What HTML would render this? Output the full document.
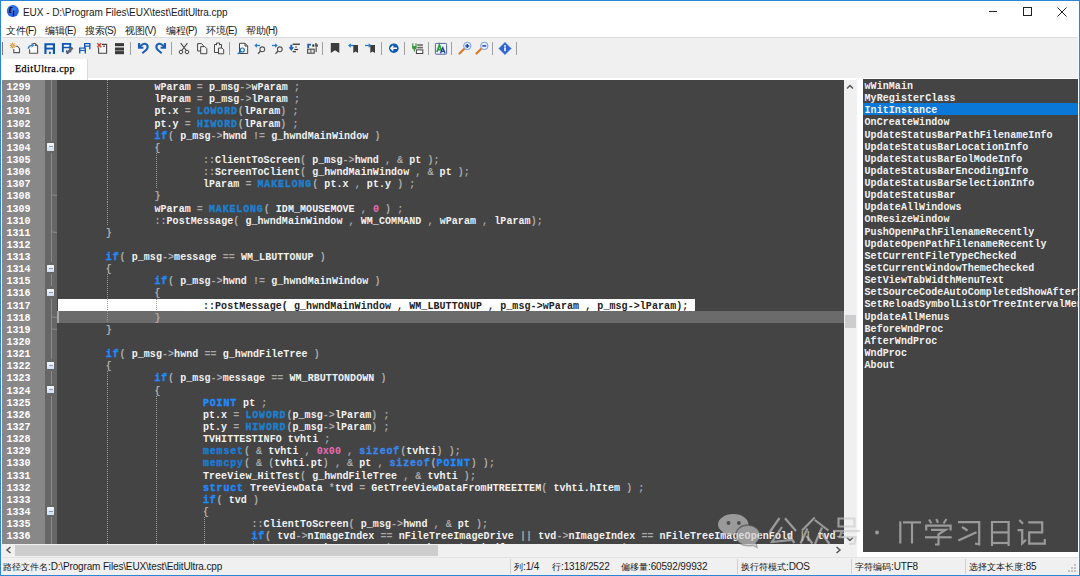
<!DOCTYPE html><html><head><meta charset="utf-8"><style>
*{margin:0;padding:0;box-sizing:border-box}
html,body{width:1080px;height:576px;overflow:hidden;background:#fff}
body{position:relative;font-family:"Liberation Sans",sans-serif}
.a{position:absolute}
.t{white-space:pre}
#code .ln{position:absolute;left:0;height:12.135px;white-space:pre;font:bold 10px/12.135px "Liberation Mono",monospace;letter-spacing:0.067px;transform:translateY(1.6px) scaleY(1.12);transform-origin:0 8px;color:#f2f2f2}
.o{color:#a9a9a9}
.k,.m,.f,.s{letter-spacing:0.826px;-webkit-text-stroke:0.35px currentColor}
.k{color:#1f8bff}
.m{color:#1e80cf}
.f{color:#1c7cd6}
.s{color:#3a86ea}
.n{color:#ea6cb4}
.sel{color:#222}
.num{position:absolute;left:4.5px;font:bold 10px/12.135px "Liberation Mono",monospace;letter-spacing:0px;transform:translateY(1.6px) scaleY(1.12);transform-origin:0 8px;color:#fff}
.menu{letter-spacing:-0.85px;font-size:10px;line-height:12px;top:24.5px;color:#1a1a1a}
.sb .cj{font-size:9.3px;letter-spacing:0}
.menu .cj{font-size:9.8px;letter-spacing:-0.2px}
.sb{letter-spacing:-0.15px;font-size:10px;line-height:12px;top:561px;color:#1a1a1a}
.fn{position:absolute;left:1.5px;font:bold 10px/12.135px "Liberation Mono",monospace;letter-spacing:0.067px;transform:translateY(1.6px) scaleY(1.12);transform-origin:0 8px;color:#f2f2f2;white-space:pre}
</style></head><body>
<div class="a" style="left:0;top:0;width:1080px;height:576px;border:1px solid #2b87d6;border-width:1px 1px 1.5px 1.5px"></div>
<svg class="a" style="left:0;top:0" width="26" height="22"><defs><radialGradient id="gi" cx="45%" cy="40%" r="60%"><stop offset="0" stop-color="#3d8bff"/><stop offset="1" stop-color="#1f55e0"/></radialGradient></defs><circle cx="12.8" cy="11" r="6" fill="url(#gi)"/><path d="M10.2 7.3 L9.3 12.6 M10.2 7.6 H12.6 M9.6 10.2 H11.6 M9.3 12.4 H11.3 M13.7 10.5 L13.4 15.5" stroke="#111" stroke-width="1.3" fill="none"/></svg>
<div class="a t" style="left:23px;top:6.6px;font-size:10px;line-height:12px;color:#1a1a1a;letter-spacing:-0.05px">EUX - D:\Program Files\EUX\test\EditUltra.cpp</div>
<div class="a" style="left:989px;top:11px;width:8px;height:1px;background:#222"></div>
<div class="a" style="left:1023px;top:7px;width:9px;height:9px;border:1px solid #222"></div>
<svg class="a" style="left:1057px;top:7px" width="10" height="10"><path d="M0.5 0.5L9.5 9.5M9.5 0.5L0.5 9.5" stroke="#222" stroke-width="1"/></svg>
<div class="a t menu" style="left:6px"><span class="cj">文件</span>(F)</div>
<div class="a t menu" style="left:45px"><span class="cj">编辑</span>(E)</div>
<div class="a t menu" style="left:85px"><span class="cj">搜索</span>(S)</div>
<div class="a t menu" style="left:125px"><span class="cj">视图</span>(V)</div>
<div class="a t menu" style="left:166px"><span class="cj">编程</span>(P)</div>
<div class="a t menu" style="left:206px"><span class="cj">环境</span>(E)</div>
<div class="a t menu" style="left:246px"><span class="cj">帮助</span>(H)</div>
<div class="a" style="left:2px;top:37px;width:1076px;height:1px;background:#dcdcdc"></div>
<div class="a" style="left:2px;top:38px;width:1076px;height:41px;background:#f0f0f0"></div>
<div class="a" style="left:2px;top:42px;width:1px;height:13px;background:#777"></div>
<div class="a" style="left:130px;top:42px;width:1px;height:13px;background:#a0a0a0"></div>
<div class="a" style="left:171px;top:42px;width:1px;height:13px;background:#a0a0a0"></div>
<div class="a" style="left:229px;top:42px;width:1px;height:13px;background:#a0a0a0"></div>
<div class="a" style="left:322px;top:42px;width:1px;height:13px;background:#a0a0a0"></div>
<div class="a" style="left:381px;top:42px;width:1px;height:13px;background:#a0a0a0"></div>
<div class="a" style="left:404px;top:42px;width:1px;height:13px;background:#a0a0a0"></div>
<div class="a" style="left:428px;top:42px;width:1px;height:13px;background:#a0a0a0"></div>
<div class="a" style="left:451px;top:42px;width:1px;height:13px;background:#a0a0a0"></div>
<div class="a" style="left:492px;top:42px;width:1px;height:13px;background:#a0a0a0"></div>
<div class="a" style="left:516px;top:42px;width:1px;height:13px;background:#a0a0a0"></div>
<svg class="a" style="left:0;top:38px" width="530" height="20" viewBox="0 0 530 20"><path d="M13.8 11 V14.6 H19.5 V10.4 L17.3 8.2 H15.5" fill="#fafafa" stroke="#555" stroke-width="1.1"/><path d="M12.4 5 L13.1 6.9 L14.9 6 L14 7.8 L15.8 8.5 L14 9.2 L14.9 11 L13.1 10.1 L12.4 12 L11.7 10.1 L9.9 11 L10.8 9.2 L9 8.5 L10.8 7.8 L9.9 6 L11.7 6.9 Z" fill="#d8963a" transform="translate(0.2,-0.9) scale(1)"/><circle cx="12.6" cy="7.6" r="1.1" fill="#f3c58a"/><path d="M29.6 11.3 V15.3 H37.6 V7.9 L35.2 5.5 H32.5" fill="#fafafa" stroke="#555" stroke-width="1.1"/><path d="M35 5.5 V8 H37.6 Z" fill="#555"/><path d="M28.3 10.8 Q28.6 7.6 32.2 7.3" fill="none" stroke="#3b82cc" stroke-width="1.5"/><path d="M31.6 5 L34.5 7.2 L31.6 9.6 Z" fill="#3b82cc"/><path d="M44.4 5.2 H55.0 V15.899999999999999 H52.88 V11.405999999999999 H46.519999999999996 V15.899999999999999 H44.4 Z" fill="#0d56b0"/><rect x="46.519999999999996" y="7.2330000000000005" width="6.359999999999999" height="2.3539999999999996" fill="#f4f6fa"/><rect x="48.958" y="13.760000000000002" width="1.802" height="2.14" fill="#0d56b0"/><path d="M61.9 5 H71.2 V14.2 H69.34 V10.335999999999999 H63.76 V14.2 H61.9 Z" fill="#0d56b0"/><rect x="63.76" y="6.747999999999999" width="5.58" height="2.024" fill="#f4f6fa"/><rect x="65.899" y="12.36" width="1.5810000000000002" height="1.8399999999999999" fill="#0d56b0"/><path d="M67 15.3 L72.6 9.7" stroke="#666" stroke-width="2.6"/><path d="M66.2 16 L67.3 14.3 L68.2 15.2 Z" fill="#333"/><path d="M84 5 H90.5 V11.3 H89.2 V8.654 H85.3 V11.3 H84 Z" fill="#0d56b0"/><rect x="85.3" y="6.197" width="3.9" height="1.386" fill="#f4f6fa"/><path d="M79 9.5 H86 V15.6 H84.6 V13.038 H80.4 V15.6 H79 Z" fill="#1560b8"/><rect x="80.4" y="10.659" width="4.199999999999999" height="1.3419999999999999" fill="#cfe0f4"/><path d="M98.6 6.4 H106.6 V15.3 H98.6 Z" fill="#f4f4f4" stroke="#444" stroke-width="1.1"/><rect x="97" y="4.5" width="5" height="5" fill="#f0f0f0"/><path d="M97.3 5.2 L101.3 9.2 M101.3 5.2 L97.3 9.2" stroke="#c8402e" stroke-width="1.4"/><rect x="103" y="7.6" width="2" height="1.2" fill="#555"/><rect x="115" y="5.1" width="9" height="3.1" fill="#3a3a3a"/><rect x="115" y="9.5" width="9" height="3.1" fill="#3a3a3a"/><rect x="115" y="13.1" width="9" height="3.1" fill="#3a3a3a"/><path d="M139 5.1 V9.8 H143.4" fill="none" stroke="#1a5fb4" stroke-width="2.1"/><path d="M139.8 9 L141.6 7 Q144.2 4.6 146.7 6.5 Q148.8 8.8 146.6 11.5 L142.3 15.3" fill="none" stroke="#1a5fb4" stroke-width="2"/><path d="M165 5.1 V9.8 H160.6" fill="none" stroke="#1a5fb4" stroke-width="2.1"/><path d="M164.2 9 L162.4 7 Q159.8 4.6 157.3 6.5 Q155.2 8.8 157.4 11.5 L161.7 15.3" fill="none" stroke="#1a5fb4" stroke-width="2"/><path d="M180.7 5.2 L186.3 12.5 M187.4 5.2 L181.8 12.5" stroke="#444" stroke-width="1.1"/><circle cx="181" cy="14" r="1.8" fill="none" stroke="#444" stroke-width="1"/><circle cx="187" cy="14" r="1.8" fill="none" stroke="#444" stroke-width="1"/><path d="M197.6 5.6 H201.5 L203.3 7.4 V13 H197.6 Z" fill="#f4f4f4" stroke="#444" stroke-width="1"/><path d="M200.7 8.6 H204.8 L206.8 10.6 V15.7 H200.7 Z" fill="#f4f4f4" stroke="#444" stroke-width="1"/><path d="M214.5 6.5 H221.5 V14.5 H214.5 Z" fill="#f4f4f4" stroke="#444" stroke-width="1"/><path d="M216.5 7.3 V5 H219.5 V7.3" fill="#f4f4f4" stroke="#444" stroke-width="1"/><path d="M218.5 10 H222 L223.7 11.7 V15.8 H218.5 Z" fill="#f4f4f4" stroke="#444" stroke-width="1"/><path d="M239.5 5.3 H245 L247.7 8 V15.5 H239.5 Z" fill="#f4f4f4" stroke="#444" stroke-width="1"/><path d="M245 5.3 V8 H247.7" fill="none" stroke="#444" stroke-width="1"/><circle cx="242.3" cy="12" r="2" fill="#f4f4f4" stroke="#2070c0" stroke-width="1.2"/><path d="M240.8 13.5 L237.7 16" stroke="#2070c0" stroke-width="1.4"/><path d="M255 7.5 H260" stroke="#2a7ad0" stroke-width="1.3"/><path d="M254.3 7.5 L257 5.2 V9.8 Z" fill="#2a7ad0"/><circle cx="262.3" cy="11.3" r="2.4" fill="none" stroke="#555" stroke-width="1.1"/><path d="M260.6 13 L258 15.8" stroke="#555" stroke-width="1.4"/><path d="M272 7.5 H277" stroke="#2a7ad0" stroke-width="1.3"/><path d="M277.7 7.5 L275 5.2 V9.8 Z" fill="#2a7ad0"/><circle cx="279.8" cy="11.3" r="2.4" fill="none" stroke="#555" stroke-width="1.1"/><path d="M278.1 13 L275.5 15.8" stroke="#555" stroke-width="1.4"/><path d="M291.3 6.8 V10" stroke="#1a5fb4" stroke-width="2"/><path d="M288.7 9.2 H294 L291.3 13 Z" fill="#1a5fb4"/><rect x="292.6" y="5.6" width="7.3" height="1.3" fill="#333"/><rect x="295.2" y="8.2" width="1.6" height="1.6" fill="#777"/><rect x="294.3" y="10.9" width="3.8" height="1.2" fill="#333"/><rect x="292.6" y="13.1" width="3.3" height="1.2" fill="#333"/><path d="M308.2 10 V6.6 H311" fill="none" stroke="#1a5fb4" stroke-width="1.8"/><rect x="312.3" y="6.4" width="2" height="2.3" fill="#333"/><rect x="315.3" y="5" width="1.2" height="3.7" fill="#333"/><rect x="316.3" y="6.4" width="1.5" height="2.3" fill="#333"/><rect x="307" y="10.6" width="7.8" height="5.2" fill="#555"/><rect x="308.2" y="11.8" width="2.2" height="2.8" fill="#e8e8e8"/><rect x="311.4" y="11.8" width="2.2" height="2.8" fill="#e8e8e8"/><rect x="315.6" y="9.2" width="1.2" height="4.8" fill="#555"/><path d="M330.8 5 H339.3 V15 L335 12.3 L330.8 15 Z" fill="#3c3c3c"/><path d="M349 7.5 H354.5" stroke="#2a7ad0" stroke-width="1.3"/><path d="M348 7.5 L350.8 5.3 V9.7 Z" fill="#2a7ad0"/><path d="M353.3 7 H358 V15 L355.6 13.4 L353.3 15 Z" fill="#3c3c3c"/><path d="M365 7.5 H370.5" stroke="#2a7ad0" stroke-width="1.3"/><path d="M371.5 7.5 L368.7 5.3 V9.7 Z" fill="#2a7ad0"/><path d="M370.3 7 H375 V15 L372.6 13.4 L370.3 15 Z" fill="#3c3c3c"/><circle cx="393.8" cy="10.2" r="4.8" fill="#0d5ab0"/><path d="M397 10.2 H391.2 M393.3 7.8 L390.9 10.2 L393.3 12.6" fill="none" stroke="#fff" stroke-width="1.4"/><path d="M412.8 5.3 V8 M416 5.3 V8" stroke="#3c9a3a" stroke-width="1.2"/><path d="M412.1 8 H416.7 V9.6 Q416.7 11.8 414.4 11.8 Q412.1 11.8 412.1 9.6 Z" fill="#3c9a3a"/><path d="M414.4 11.5 V13.4" stroke="#3c9a3a" stroke-width="1.2"/><rect x="417.3" y="6.2" width="5.6" height="1.6" fill="#666"/><rect x="417.3" y="8.8" width="5.6" height="1.6" fill="#666"/><rect x="416.4" y="11.9" width="6.4" height="3.6" fill="#fff" stroke="#444" stroke-width="1"/><rect x="435.4" y="5.4" width="11.2" height="10.8" rx="0.8" fill="#eef2fa" stroke="#50659e" stroke-width="1"/><path d="M436.9 14 L439.4 6.7 L441.9 14 M437.8 11.6 H441" fill="none" stroke="#2e9a3a" stroke-width="1.6"/><path d="M440.5 15.2 L442.8 9.5 L445.1 15.2 M441.3 13.4 H444.3" fill="none" stroke="#1a3a9a" stroke-width="1.2"/><path d="M459.5 15.5 L464.3 10.7" stroke="#d97a2b" stroke-width="2.2" stroke-linecap="round"/><circle cx="467.3" cy="7.9" r="3.7" fill="#e6eefc" stroke="#7a9ad8" stroke-width="1"/><path d="M465.3 7.9 H469.3 M467.3 5.9 V9.9" stroke="#1a48b0" stroke-width="1.5"/><path d="M476.5 15.5 L481.3 10.7" stroke="#d97a2b" stroke-width="2.2" stroke-linecap="round"/><circle cx="484.3" cy="7.9" r="3.7" fill="#e6eefc" stroke="#7a9ad8" stroke-width="1"/><path d="M482.3 7.9 H486.3" stroke="#1a48b0" stroke-width="1.5"/><path d="M505 4.2 L511.3 10.5 L505 16.8 L498.7 10.5 Z" fill="#2d62d2" stroke="#8aa8e8" stroke-width="0.9"/><circle cx="505" cy="8" r="0.9" fill="#fff"/><rect x="504.2" y="9.4" width="1.6" height="3.8" fill="#fff"/></svg>
<div class="a" style="left:2px;top:78px;width:1076px;height:2px;background:#fff"></div>
<div class="a" style="left:2px;top:58.5px;width:86px;height:21.5px;background:#fff;border-right:1px solid #dadada"></div>
<div class="a t" style="left:15px;top:62.5px;font:10px 'Liberation Serif';color:#000;letter-spacing:0.45px;-webkit-text-stroke:0.25px #000">EditUltra.cpp</div>
<div class="a" style="left:2px;top:80px;width:842px;height:463.6px;background:#444;overflow:hidden" id="ed"><div class="a" style="left:0;top:0.2px;width:842px;height:464px">
<div class="a" style="left:0;top:0;width:43px;height:100%;background:#888"></div>
<div class="a" style="left:43px;top:0;width:12px;height:100%;background:#666"></div>
<div class="a" style="left:49px;top:0;width:1px;height:100%;background:#8a8a8a"></div>
<div class="a" style="left:43px;top:60.675px;width:12px;height:12.135px;background:#666"></div>
<div class="a" style="left:44.7px;top:63.175px;width:7.6px;height:7.3px;background:linear-gradient(#f4f8fc,#cfe0f0);border-radius:0.5px"></div>
<div class="a" style="left:46.5px;top:66.27499999999999px;width:4px;height:1px;background:#8a9ab0"></div>
<div class="a" style="left:43px;top:182.025px;width:12px;height:12.135px;background:#666"></div>
<div class="a" style="left:44.7px;top:184.525px;width:7.6px;height:7.3px;background:linear-gradient(#f4f8fc,#cfe0f0);border-radius:0.5px"></div>
<div class="a" style="left:46.5px;top:187.625px;width:4px;height:1px;background:#8a9ab0"></div>
<div class="a" style="left:43px;top:206.295px;width:12px;height:12.135px;background:#666"></div>
<div class="a" style="left:44.7px;top:208.795px;width:7.6px;height:7.3px;background:linear-gradient(#f4f8fc,#cfe0f0);border-radius:0.5px"></div>
<div class="a" style="left:46.5px;top:211.89499999999998px;width:4px;height:1px;background:#8a9ab0"></div>
<div class="a" style="left:43px;top:279.105px;width:12px;height:12.135px;background:#666"></div>
<div class="a" style="left:44.7px;top:281.605px;width:7.6px;height:7.3px;background:linear-gradient(#f4f8fc,#cfe0f0);border-radius:0.5px"></div>
<div class="a" style="left:46.5px;top:284.70500000000004px;width:4px;height:1px;background:#8a9ab0"></div>
<div class="a" style="left:43px;top:303.375px;width:12px;height:12.135px;background:#666"></div>
<div class="a" style="left:44.7px;top:305.875px;width:7.6px;height:7.3px;background:linear-gradient(#f4f8fc,#cfe0f0);border-radius:0.5px"></div>
<div class="a" style="left:46.5px;top:308.975px;width:4px;height:1px;background:#8a9ab0"></div>
<div class="a" style="left:43px;top:424.72499999999997px;width:12px;height:12.135px;background:#666"></div>
<div class="a" style="left:44.7px;top:427.22499999999997px;width:7.6px;height:7.3px;background:linear-gradient(#f4f8fc,#cfe0f0);border-radius:0.5px"></div>
<div class="a" style="left:46.5px;top:430.325px;width:4px;height:1px;background:#8a9ab0"></div>
<svg class="a" style="left:48px;top:109.215px" width="8" height="12"><path d="M1.5 4.2 Q1.7 6.3 3.6 6.3 H7" fill="none" stroke="#8a8a8a" stroke-width="1"/></svg>
<svg class="a" style="left:48px;top:145.62px" width="8" height="12"><path d="M1.5 4.2 Q1.7 6.3 3.6 6.3 H7" fill="none" stroke="#8a8a8a" stroke-width="1"/></svg>
<svg class="a" style="left:48px;top:230.565px" width="8" height="12"><path d="M1.5 4.2 Q1.7 6.3 3.6 6.3 H7" fill="none" stroke="#8a8a8a" stroke-width="1"/></svg>
<svg class="a" style="left:48px;top:242.7px" width="8" height="12"><path d="M1.5 4.2 Q1.7 6.3 3.6 6.3 H7" fill="none" stroke="#8a8a8a" stroke-width="1"/></svg>
<div class="a" style="left:55px;top:230.565px;width:800px;height:12.135px;background:#6b6b6b"></div>
<div class="a" style="left:55px;top:230.565px;width:1.5px;height:12.135px;background:#a8a8a8"></div>
<div class="a" style="left:55.8px;top:218.43px;width:637px;height:12.135px;background:#fff"></div>
<div class="num" style="top:0.0px">1299</div>
<div class="num" style="top:12.135px">1300</div>
<div class="num" style="top:24.27px">1301</div>
<div class="num" style="top:36.405px">1302</div>
<div class="num" style="top:48.54px">1303</div>
<div class="num" style="top:60.675px">1304</div>
<div class="num" style="top:72.81px">1305</div>
<div class="num" style="top:84.945px">1306</div>
<div class="num" style="top:97.08px">1307</div>
<div class="num" style="top:109.215px">1308</div>
<div class="num" style="top:121.35px">1309</div>
<div class="num" style="top:133.48499999999999px">1310</div>
<div class="num" style="top:145.62px">1311</div>
<div class="num" style="top:157.755px">1312</div>
<div class="num" style="top:169.89px">1313</div>
<div class="num" style="top:182.025px">1314</div>
<div class="num" style="top:194.16px">1315</div>
<div class="num" style="top:206.295px">1316</div>
<div class="num" style="top:218.43px">1317</div>
<div class="num" style="top:230.565px">1318</div>
<div class="num" style="top:242.7px">1319</div>
<div class="num" style="top:254.835px">1320</div>
<div class="num" style="top:266.96999999999997px">1321</div>
<div class="num" style="top:279.105px">1322</div>
<div class="num" style="top:291.24px">1323</div>
<div class="num" style="top:303.375px">1324</div>
<div class="num" style="top:315.51px">1325</div>
<div class="num" style="top:327.645px">1326</div>
<div class="num" style="top:339.78px">1327</div>
<div class="num" style="top:351.915px">1328</div>
<div class="num" style="top:364.05px">1329</div>
<div class="num" style="top:376.185px">1330</div>
<div class="num" style="top:388.32px">1331</div>
<div class="num" style="top:400.455px">1332</div>
<div class="num" style="top:412.59px">1333</div>
<div class="num" style="top:424.72499999999997px">1334</div>
<div class="num" style="top:436.86px">1335</div>
<div class="num" style="top:448.995px">1336</div>
<div class="num" style="top:461.13px">1337</div>
<div class="a" style="left:105.14px;top:0.0px;width:1px;height:12.135px;background:repeating-linear-gradient(#9a9a9a 0 1px,transparent 1px 2px)"></div>
<div class="a" style="left:105.14px;top:12.135px;width:1px;height:12.135px;background:repeating-linear-gradient(#9a9a9a 0 1px,transparent 1px 2px)"></div>
<div class="a" style="left:105.14px;top:24.27px;width:1px;height:12.135px;background:repeating-linear-gradient(#9a9a9a 0 1px,transparent 1px 2px)"></div>
<div class="a" style="left:105.14px;top:36.405px;width:1px;height:12.135px;background:repeating-linear-gradient(#9a9a9a 0 1px,transparent 1px 2px)"></div>
<div class="a" style="left:105.14px;top:48.54px;width:1px;height:12.135px;background:repeating-linear-gradient(#9a9a9a 0 1px,transparent 1px 2px)"></div>
<div class="a" style="left:105.14px;top:60.675px;width:1px;height:12.135px;background:repeating-linear-gradient(#9a9a9a 0 1px,transparent 1px 2px)"></div>
<div class="a" style="left:105.14px;top:72.81px;width:1px;height:12.135px;background:repeating-linear-gradient(#9a9a9a 0 1px,transparent 1px 2px)"></div>
<div class="a" style="left:153.68px;top:72.81px;width:1px;height:12.135px;background:repeating-linear-gradient(#9a9a9a 0 1px,transparent 1px 2px)"></div>
<div class="a" style="left:105.14px;top:84.945px;width:1px;height:12.135px;background:repeating-linear-gradient(#9a9a9a 0 1px,transparent 1px 2px)"></div>
<div class="a" style="left:153.68px;top:84.945px;width:1px;height:12.135px;background:repeating-linear-gradient(#9a9a9a 0 1px,transparent 1px 2px)"></div>
<div class="a" style="left:105.14px;top:97.08px;width:1px;height:12.135px;background:repeating-linear-gradient(#9a9a9a 0 1px,transparent 1px 2px)"></div>
<div class="a" style="left:153.68px;top:97.08px;width:1px;height:12.135px;background:repeating-linear-gradient(#9a9a9a 0 1px,transparent 1px 2px)"></div>
<div class="a" style="left:105.14px;top:109.215px;width:1px;height:12.135px;background:repeating-linear-gradient(#9a9a9a 0 1px,transparent 1px 2px)"></div>
<div class="a" style="left:105.14px;top:121.35px;width:1px;height:12.135px;background:repeating-linear-gradient(#9a9a9a 0 1px,transparent 1px 2px)"></div>
<div class="a" style="left:105.14px;top:133.48499999999999px;width:1px;height:12.135px;background:repeating-linear-gradient(#9a9a9a 0 1px,transparent 1px 2px)"></div>
<div class="a" style="left:105.14px;top:194.16px;width:1px;height:12.135px;background:repeating-linear-gradient(#9a9a9a 0 1px,transparent 1px 2px)"></div>
<div class="a" style="left:105.14px;top:206.295px;width:1px;height:12.135px;background:repeating-linear-gradient(#9a9a9a 0 1px,transparent 1px 2px)"></div>
<div class="a" style="left:105.14px;top:218.43px;width:1px;height:12.135px;background:repeating-linear-gradient(#9a9a9a 0 1px,transparent 1px 2px)"></div>
<div class="a" style="left:153.68px;top:218.43px;width:1px;height:12.135px;background:repeating-linear-gradient(#9a9a9a 0 1px,transparent 1px 2px)"></div>
<div class="a" style="left:105.14px;top:230.565px;width:1px;height:12.135px;background:repeating-linear-gradient(#9a9a9a 0 1px,transparent 1px 2px)"></div>
<div class="a" style="left:105.14px;top:291.24px;width:1px;height:12.135px;background:repeating-linear-gradient(#9a9a9a 0 1px,transparent 1px 2px)"></div>
<div class="a" style="left:105.14px;top:303.375px;width:1px;height:12.135px;background:repeating-linear-gradient(#9a9a9a 0 1px,transparent 1px 2px)"></div>
<div class="a" style="left:105.14px;top:315.51px;width:1px;height:12.135px;background:repeating-linear-gradient(#9a9a9a 0 1px,transparent 1px 2px)"></div>
<div class="a" style="left:153.68px;top:315.51px;width:1px;height:12.135px;background:repeating-linear-gradient(#9a9a9a 0 1px,transparent 1px 2px)"></div>
<div class="a" style="left:105.14px;top:327.645px;width:1px;height:12.135px;background:repeating-linear-gradient(#9a9a9a 0 1px,transparent 1px 2px)"></div>
<div class="a" style="left:153.68px;top:327.645px;width:1px;height:12.135px;background:repeating-linear-gradient(#9a9a9a 0 1px,transparent 1px 2px)"></div>
<div class="a" style="left:105.14px;top:339.78px;width:1px;height:12.135px;background:repeating-linear-gradient(#9a9a9a 0 1px,transparent 1px 2px)"></div>
<div class="a" style="left:153.68px;top:339.78px;width:1px;height:12.135px;background:repeating-linear-gradient(#9a9a9a 0 1px,transparent 1px 2px)"></div>
<div class="a" style="left:105.14px;top:351.915px;width:1px;height:12.135px;background:repeating-linear-gradient(#9a9a9a 0 1px,transparent 1px 2px)"></div>
<div class="a" style="left:153.68px;top:351.915px;width:1px;height:12.135px;background:repeating-linear-gradient(#9a9a9a 0 1px,transparent 1px 2px)"></div>
<div class="a" style="left:105.14px;top:364.05px;width:1px;height:12.135px;background:repeating-linear-gradient(#9a9a9a 0 1px,transparent 1px 2px)"></div>
<div class="a" style="left:153.68px;top:364.05px;width:1px;height:12.135px;background:repeating-linear-gradient(#9a9a9a 0 1px,transparent 1px 2px)"></div>
<div class="a" style="left:105.14px;top:376.185px;width:1px;height:12.135px;background:repeating-linear-gradient(#9a9a9a 0 1px,transparent 1px 2px)"></div>
<div class="a" style="left:153.68px;top:376.185px;width:1px;height:12.135px;background:repeating-linear-gradient(#9a9a9a 0 1px,transparent 1px 2px)"></div>
<div class="a" style="left:105.14px;top:388.32px;width:1px;height:12.135px;background:repeating-linear-gradient(#9a9a9a 0 1px,transparent 1px 2px)"></div>
<div class="a" style="left:153.68px;top:388.32px;width:1px;height:12.135px;background:repeating-linear-gradient(#9a9a9a 0 1px,transparent 1px 2px)"></div>
<div class="a" style="left:105.14px;top:400.455px;width:1px;height:12.135px;background:repeating-linear-gradient(#9a9a9a 0 1px,transparent 1px 2px)"></div>
<div class="a" style="left:153.68px;top:400.455px;width:1px;height:12.135px;background:repeating-linear-gradient(#9a9a9a 0 1px,transparent 1px 2px)"></div>
<div class="a" style="left:105.14px;top:412.59px;width:1px;height:12.135px;background:repeating-linear-gradient(#9a9a9a 0 1px,transparent 1px 2px)"></div>
<div class="a" style="left:153.68px;top:412.59px;width:1px;height:12.135px;background:repeating-linear-gradient(#9a9a9a 0 1px,transparent 1px 2px)"></div>
<div class="a" style="left:105.14px;top:424.72499999999997px;width:1px;height:12.135px;background:repeating-linear-gradient(#9a9a9a 0 1px,transparent 1px 2px)"></div>
<div class="a" style="left:153.68px;top:424.72499999999997px;width:1px;height:12.135px;background:repeating-linear-gradient(#9a9a9a 0 1px,transparent 1px 2px)"></div>
<div class="a" style="left:105.14px;top:436.86px;width:1px;height:12.135px;background:repeating-linear-gradient(#9a9a9a 0 1px,transparent 1px 2px)"></div>
<div class="a" style="left:153.68px;top:436.86px;width:1px;height:12.135px;background:repeating-linear-gradient(#9a9a9a 0 1px,transparent 1px 2px)"></div>
<div class="a" style="left:202.22px;top:436.86px;width:1px;height:12.135px;background:repeating-linear-gradient(#9a9a9a 0 1px,transparent 1px 2px)"></div>
<div class="a" style="left:105.14px;top:448.995px;width:1px;height:12.135px;background:repeating-linear-gradient(#9a9a9a 0 1px,transparent 1px 2px)"></div>
<div class="a" style="left:153.68px;top:448.995px;width:1px;height:12.135px;background:repeating-linear-gradient(#9a9a9a 0 1px,transparent 1px 2px)"></div>
<div class="a" style="left:202.22px;top:448.995px;width:1px;height:12.135px;background:repeating-linear-gradient(#9a9a9a 0 1px,transparent 1px 2px)"></div>
<div class="a" style="left:105.14px;top:461.13px;width:1px;height:12.135px;background:repeating-linear-gradient(#9a9a9a 0 1px,transparent 1px 2px)"></div>
<div class="a" style="left:153.68px;top:461.13px;width:1px;height:12.135px;background:repeating-linear-gradient(#9a9a9a 0 1px,transparent 1px 2px)"></div>
<div class="a" style="left:202.22px;top:461.13px;width:1px;height:12.135px;background:repeating-linear-gradient(#9a9a9a 0 1px,transparent 1px 2px)"></div>
<div class="a" style="left:250.76px;top:461.13px;width:1px;height:12.135px;background:repeating-linear-gradient(#9a9a9a 0 1px,transparent 1px 2px)"></div>
<div id="code" class="a" style="left:0;top:0">
<div class="ln" style="left:152.38px;top:0.0px">wParam<span class="o"> = </span>p_msg<span class="o">-&gt;</span>wParam<span class="o"> ;</span></div>
<div class="ln" style="left:152.38px;top:12.135px">lParam<span class="o"> = </span>p_msg<span class="o">-&gt;</span>lParam<span class="o"> ;</span></div>
<div class="ln" style="left:152.38px;top:24.27px">pt.x<span class="o"> = </span><span class="m">LOWORD</span><span class="o">(</span>lParam<span class="o">)</span><span class="o"> ;</span></div>
<div class="ln" style="left:152.38px;top:36.405px">pt.y<span class="o"> = </span><span class="m">HIWORD</span><span class="o">(</span>lParam<span class="o">)</span><span class="o"> ;</span></div>
<div class="ln" style="left:152.38px;top:48.54px"><span class="k">if</span><span class="o">( </span>p_msg<span class="o">-&gt;</span>hwnd<span class="o"> != </span>g_hwndMainWindow<span class="o"> )</span></div>
<div class="ln" style="left:152.38px;top:60.675px"><span class="o">{</span></div>
<div class="ln" style="left:200.92px;top:72.81px"><span class="o">::</span>ClientToScreen<span class="o">( </span>p_msg<span class="o">-&gt;</span>hwnd<span class="o"> , &amp; </span>pt<span class="o"> );</span></div>
<div class="ln" style="left:200.92px;top:84.945px"><span class="o">::</span>ScreenToClient<span class="o">( </span>g_hwndMainWindow<span class="o"> , &amp; </span>pt<span class="o"> );</span></div>
<div class="ln" style="left:200.92px;top:97.08px">lParam<span class="o"> = </span><span class="m">MAKELONG</span><span class="o">( </span>pt.x<span class="o"> , </span>pt.y<span class="o"> ) ;</span></div>
<div class="ln" style="left:152.38px;top:109.215px"><span class="o">}</span></div>
<div class="ln" style="left:152.38px;top:121.35px">wParam<span class="o"> = </span><span class="m">MAKELONG</span><span class="o">( </span>IDM_MOUSEMOVE<span class="o"> , </span><span class="n">0</span><span class="o"> ) ;</span></div>
<div class="ln" style="left:152.38px;top:133.48499999999999px"><span class="o">::</span>PostMessage<span class="o">( </span>g_hwndMainWindow<span class="o"> , </span>WM_COMMAND<span class="o"> , </span>wParam<span class="o"> , </span>lParam<span class="o">);</span></div>
<div class="ln" style="left:103.84px;top:145.62px"><span class="o">}</span></div>
<div class="ln" style="left:55.300000000000004px;top:157.755px"></div>
<div class="ln" style="left:103.84px;top:169.89px"><span class="k">if</span><span class="o">( </span>p_msg<span class="o">-&gt;</span>message<span class="o"> == </span>WM_LBUTTONUP<span class="o"> )</span></div>
<div class="ln" style="left:103.84px;top:182.025px"><span class="o">{</span></div>
<div class="ln" style="left:152.38px;top:194.16px"><span class="k">if</span><span class="o">( </span>p_msg<span class="o">-&gt;</span>hwnd<span class="o"> != </span>g_hwndMainWindow<span class="o"> )</span></div>
<div class="ln" style="left:152.38px;top:206.295px"><span class="o">{</span></div>
<div class="ln" style="left:200.92px;top:218.43px"><span class="sel">::PostMessage( g_hwndMainWindow , WM_LBUTTONUP , p_msg-&gt;wParam , p_msg-&gt;lParam);</span></div>
<div class="ln" style="left:152.38px;top:230.565px"><span class="o">}</span></div>
<div class="ln" style="left:103.84px;top:242.7px"><span class="o">}</span></div>
<div class="ln" style="left:55.300000000000004px;top:254.835px"></div>
<div class="ln" style="left:103.84px;top:266.96999999999997px"><span class="k">if</span><span class="o">( </span>p_msg<span class="o">-&gt;</span>hwnd<span class="o"> == </span>g_hwndFileTree<span class="o"> )</span></div>
<div class="ln" style="left:103.84px;top:279.105px"><span class="o">{</span></div>
<div class="ln" style="left:152.38px;top:291.24px"><span class="k">if</span><span class="o">( </span>p_msg<span class="o">-&gt;</span>message<span class="o"> == </span>WM_RBUTTONDOWN<span class="o"> )</span></div>
<div class="ln" style="left:152.38px;top:303.375px"><span class="o">{</span></div>
<div class="ln" style="left:200.92px;top:315.51px"><span class="k">POINT</span> pt<span class="o"> ;</span></div>
<div class="ln" style="left:200.92px;top:327.645px">pt.x<span class="o"> = </span><span class="m">LOWORD</span><span class="o">(</span>p_msg<span class="o">-&gt;</span>lParam<span class="o">)</span><span class="o"> ;</span></div>
<div class="ln" style="left:200.92px;top:339.78px">pt.y<span class="o"> = </span><span class="m">HIWORD</span><span class="o">(</span>p_msg<span class="o">-&gt;</span>lParam<span class="o">)</span><span class="o"> ;</span></div>
<div class="ln" style="left:200.92px;top:351.915px">TVHITTESTINFO tvhti<span class="o"> ;</span></div>
<div class="ln" style="left:200.92px;top:364.05px"><span class="f">memset</span><span class="o">( &amp; </span>tvhti<span class="o"> , </span><span class="n">0x00</span><span class="o"> , </span><span class="s">sizeof</span><span class="o">(</span>tvhti<span class="o">) );</span></div>
<div class="ln" style="left:200.92px;top:376.185px"><span class="f">memcpy</span><span class="o">( &amp; (</span>tvhti.pt<span class="o">) , &amp; </span>pt<span class="o"> , </span><span class="s">sizeof</span><span class="o">(</span><span class="k">POINT</span><span class="o">) );</span></div>
<div class="ln" style="left:200.92px;top:388.32px">TreeView_HitTest<span class="o">( </span>g_hwndFileTree<span class="o"> , &amp; </span>tvhti<span class="o"> );</span></div>
<div class="ln" style="left:200.92px;top:400.455px"><span class="k">struct</span> TreeViewData <span class="o">*</span>tvd<span class="o"> = </span>GetTreeViewDataFromHTREEITEM<span class="o">( </span>tvhti.hItem<span class="o"> ) ;</span></div>
<div class="ln" style="left:200.92px;top:412.59px"><span class="k">if</span><span class="o">( </span>tvd<span class="o"> )</span></div>
<div class="ln" style="left:200.92px;top:424.72499999999997px"><span class="o">{</span></div>
<div class="ln" style="left:249.45999999999998px;top:436.86px"><span class="o">::</span>ClientToScreen<span class="o">( </span>p_msg<span class="o">-&gt;</span>hwnd<span class="o"> , &amp; </span>pt<span class="o"> );</span></div>
<div class="ln" style="left:249.45999999999998px;top:448.995px"><span class="k">if</span><span class="o">( </span>tvd<span class="o">-&gt;</span>nImageIndex<span class="o"> == </span>nFileTreeImageDrive<span class="o"> || </span>tvd<span class="o">-&gt;</span>nImageIndex<span class="o"> == </span>nFileTreeImageOpenFold<span class="o"> || </span>tvd<span class="o">-&gt;</span>nImageIndex<span class="o"> == </span>nFileTreeImageClosedFold<span class="o"> )</span></div>
<div class="ln" style="left:298.0px;top:461.13px">TrackPopupMenu<span class="o">( </span>GetSubMenu<span class="o">( </span>g_hFileTreePopupMenu<span class="o"> , </span><span class="n">0</span><span class="o"> ) , </span>TPM_LEFTALIGN<span class="o"> , </span>pt.x<span class="o"> , </span>pt.y<span class="o"> , </span><span class="n">0</span><span class="o"> , </span>g_hwndMainWindow<span class="o"> , </span><span class="k">NULL</span><span class="o"> );</span></div>
</div>
</div></div>
<div class="a" style="left:2px;top:543.6px;width:855px;height:13.4px;background:#f0f0f0"></div>
<div class="a" style="left:15px;top:545px;width:423px;height:11px;background:#cdcdcd"></div>
<svg class="a" style="left:5px;top:546px" width="8" height="8"><path d="M5.5 1L2 4L5.5 7" stroke="#555" stroke-width="1.5" fill="none"/></svg>
<svg class="a" style="left:834px;top:546px" width="8" height="8"><path d="M2.5 1L6 4L2.5 7" stroke="#555" stroke-width="1.5" fill="none"/></svg>
<div class="a" style="left:844px;top:80px;width:13px;height:463.5px;background:#f0f0f0"></div>
<div class="a" style="left:845px;top:315px;width:11px;height:13px;background:#cdcdcd"></div>
<svg class="a" style="left:846px;top:83px" width="8" height="8"><path d="M1 5.5L4 2.5L7 5.5" stroke="#555" stroke-width="1.5" fill="none"/></svg>
<svg class="a" style="left:846px;top:535px" width="8" height="8"><path d="M1 2.5L4 5.5L7 2.5" stroke="#555" stroke-width="1.5" fill="none"/></svg>
<div class="a" style="left:863px;top:79px;width:215px;height:472.5px;background:#444;overflow:hidden">
<div class="a" style="left:0;top:24.27px;width:215px;height:12.135px;background:#0a78d7"></div>
<div class="fn" style="top:0.0px">wWinMain</div>
<div class="fn" style="top:12.135px">MyRegisterClass</div>
<div class="fn" style="top:24.27px">InitInstance</div>
<div class="fn" style="top:36.405px">OnCreateWindow</div>
<div class="fn" style="top:48.54px">UpdateStatusBarPathFilenameInfo</div>
<div class="fn" style="top:60.675px">UpdateStatusBarLocationInfo</div>
<div class="fn" style="top:72.81px">UpdateStatusBarEolModeInfo</div>
<div class="fn" style="top:84.945px">UpdateStatusBarEncodingInfo</div>
<div class="fn" style="top:97.08px">UpdateStatusBarSelectionInfo</div>
<div class="fn" style="top:109.215px">UpdateStatusBar</div>
<div class="fn" style="top:121.35px">UpdateAllWindows</div>
<div class="fn" style="top:133.48499999999999px">OnResizeWindow</div>
<div class="fn" style="top:145.62px">PushOpenPathFilenameRecently</div>
<div class="fn" style="top:157.755px">UpdateOpenPathFilenameRecently</div>
<div class="fn" style="top:169.89px">SetCurrentFileTypeChecked</div>
<div class="fn" style="top:182.025px">SetCurrentWindowThemeChecked</div>
<div class="fn" style="top:194.16px">SetViewTabWidthMenuText</div>
<div class="fn" style="top:206.295px">SetSourceCodeAutoCompletedShowAfterInputCharacter</div>
<div class="fn" style="top:218.43px">SetReloadSymbolListOrTreeIntervalMenuText</div>
<div class="fn" style="top:230.565px">UpdateAllMenus</div>
<div class="fn" style="top:242.7px">BeforeWndProc</div>
<div class="fn" style="top:254.835px">AfterWndProc</div>
<div class="fn" style="top:266.96999999999997px">WndProc</div>
<div class="fn" style="top:279.105px">About</div>
</div>
<div class="a" style="left:2px;top:557px;width:1076px;height:1px;background:#e3e3e3"></div>
<div class="a" style="left:2px;top:558px;width:1076px;height:16.5px;background:#f0f0f0"></div>
<div class="a" style="left:510px;top:559px;width:1px;height:15px;background:#d0d0d0"></div>
<div class="a" style="left:737px;top:559px;width:1px;height:15px;background:#d0d0d0"></div>
<div class="a" style="left:851px;top:559px;width:1px;height:15px;background:#d0d0d0"></div>
<div class="a" style="left:965px;top:559px;width:1px;height:15px;background:#d0d0d0"></div>
<div class="a t sb" style="left:3px"><span class="cj">路径文件名</span>:D:\Program Files\EUX\test\EditUltra.cpp</div>
<div class="a t sb" style="left:514px"><span class="cj">列</span>:1/4</div>
<div class="a t sb" style="left:552px"><span class="cj">行</span>:1318/2522</div>
<div class="a t sb" style="left:621px"><span class="cj">偏移量</span>:60592/99932</div>
<div class="a t sb" style="left:741px"><span class="cj">换行符模式</span>:DOS</div>
<div class="a t sb" style="left:855px"><span class="cj">字符编码</span>:UTF8</div>
<div class="a t sb" style="left:969px"><span class="cj">选择文本长度</span>:85</div>
<div class="a" style="left:1074px;top:564px;width:1.5px;height:1.5px;background:#c4c4c4"></div>
<div class="a" style="left:1071px;top:567px;width:1.5px;height:1.5px;background:#c4c4c4"></div>
<div class="a" style="left:1074px;top:567px;width:1.5px;height:1.5px;background:#c4c4c4"></div>
<div class="a" style="left:1068px;top:570px;width:1.5px;height:1.5px;background:#c4c4c4"></div>
<div class="a" style="left:1071px;top:570px;width:1.5px;height:1.5px;background:#c4c4c4"></div>
<div class="a" style="left:1074px;top:570px;width:1.5px;height:1.5px;background:#c4c4c4"></div>
<svg class="a" style="left:0;top:0;opacity:0.64" width="1080" height="576" viewBox="0 0 1080 576"><path d="M733.3 514 C742 514 748.5 519 748.5 524.5 C748.5 530 742 535 733.3 535 C731 535 729 534.7 727 534 L721.5 537 L723 532 C720 530 718 527.5 718 524.5 C718 519 724.6 514 733.3 514 Z" fill="rgb(203,203,203)"/><circle cx="728.5" cy="523" r="1.9" fill="#444" fill-opacity="0.9"/><circle cx="738.9" cy="523" r="1.9" fill="#444" fill-opacity="0.9"/><path d="M747.8 525 C754.5 525 760 529.5 760 535.3 C760 538.3 758.5 541 756 543 L757 547.5 L752.5 545.2 C751 545.6 749.5 545.8 747.8 545.8 C741 545.8 735.8 541.2 735.8 535.3 C735.8 529.5 741 525 747.8 525 Z" fill="rgb(203,203,203)" stroke="#444" stroke-opacity="0.6" stroke-width="1.4"/><g fill="none" stroke="rgb(203,203,203)" stroke-width="2.2"><path d="M779.5 518 L769.8 532"/><path d="M785 518.3 L796 531"/><path d="M782 527 L772 542 L791.5 539.8"/><path d="M787.5 533.5 L794.5 543"/><path d="M814.8 517.5 L802 530.5"/><path d="M814.8 520 L828.5 530.5"/><path d="M807.5 528.5 L800.5 543.5"/><path d="M806.5 536 L812.5 543.5"/><path d="M822 527.5 L815 544"/><path d="M821.5 533 L829.5 544"/><path d="M838.5 518.5 H854.5 V526.5 H838.5 Z"/><path d="M833 531 H860"/><path d="M841.5 531.5 L839.8 537.2 H855.5 L854.5 543.5 L849 544"/><path d="M903 522.4 H921"/><path d="M912 522.4 V543.5"/><path d="M900.3 521.3 V543.5"/><path d="M929 519.5 L931.3 523.3"/><path d="M936.3 519 L938 522.8"/><path d="M946.5 519 L943.5 523.5"/><path d="M926.2 530.5 V525.7 H950.6 V530.5"/><path d="M931 529.8 H945.5 L938.5 534.3 V544.5 L935 544.5"/><path d="M925 537.3 H951.7"/><path d="M958 522.2 H979.2 V544.3 L975 543.5"/><path d="M962 527 L967.5 530.5"/><path d="M958.3 540.5 L976.5 532.2"/><path d="M992 546 V522 H1008.6 V546"/><path d="M992 532.4 H1008.6"/><path d="M992 543 H1008.6"/><path d="M1019.3 520 L1023 523.8"/><path d="M1017.6 530.2 H1022.2 V543.5 L1026 539.8"/><path d="M1028.2 522.3 H1042.2 V532.3 H1029.2 V543.6 H1044.8 V539"/></g><circle cx="877" cy="532.4" r="2" fill="rgb(203,203,203)"/></svg>
</body></html>
